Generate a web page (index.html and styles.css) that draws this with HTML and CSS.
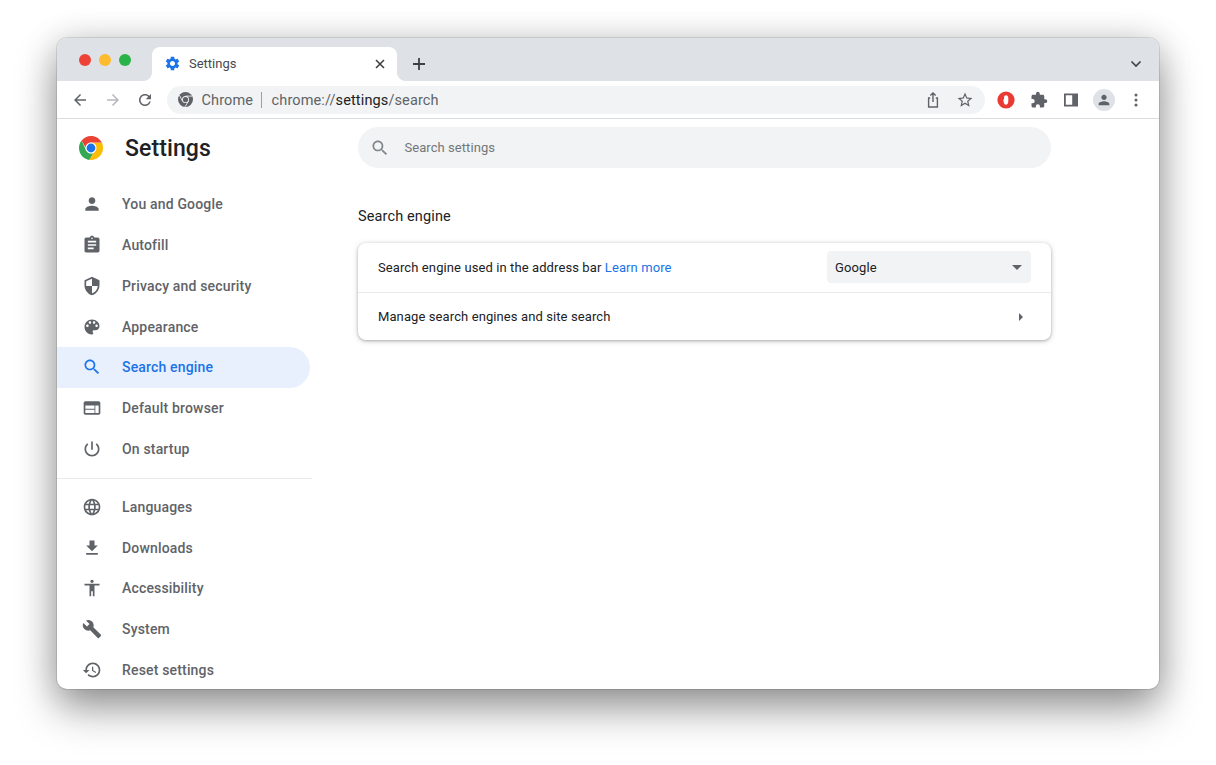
FILE: index.html
```html
<!DOCTYPE html>
<html lang="en">
<head>
<meta charset="utf-8">
<title>Settings</title>
<link rel="stylesheet" href="styles.css">
</head>
<body>
<svg class="defs" width="0" height="0" aria-hidden="true">
  <symbol id="i-person" viewBox="0 0 24 24"><path d="M12 12c2.21 0 4-1.79 4-4s-1.79-4-4-4-4 1.79-4 4 1.79 4 4 4zm0 2c-2.67 0-8 1.34-8 4v2h16v-2c0-2.66-5.33-4-8-4z"/></symbol>
  <symbol id="i-assign" viewBox="0 0 24 24"><path d="M19 3h-4.18C14.4 1.84 13.3 1 12 1c-1.3 0-2.4.84-2.82 2H5c-1.1 0-2 .9-2 2v14c0 1.1.9 2 2 2h14c1.1 0 2-.9 2-2V5c0-1.1-.9-2-2-2zm-7 0c.55 0 1 .45 1 1s-.45 1-1 1-1-.45-1-1 .45-1 1-1zm2 14H7v-2h7v2zm3-4H7v-2h10v2zm0-4H7V7h10v2z"/></symbol>
  <symbol id="i-shield" viewBox="0 0 24 24"><path d="M12 1L3 5v6c0 5.55 3.84 10.74 9 12 5.16-1.26 9-6.45 9-12V5l-9-4zm0 10.99h7c-.53 4.12-3.28 7.79-7 8.94V12H5V6.3l7-3.11v8.8z"/></symbol>
  <symbol id="i-palette" viewBox="0 0 24 24"><path d="M12 3c-4.97 0-9 4.03-9 9s4.03 9 9 9c.83 0 1.5-.67 1.5-1.5 0-.39-.15-.74-.39-1.01-.23-.26-.38-.61-.38-.99 0-.83.67-1.5 1.5-1.5H16c2.76 0 5-2.24 5-5 0-4.42-4.03-8-9-8zm-5.5 9c-.83 0-1.5-.67-1.5-1.5S5.67 9 6.5 9 8 9.67 8 10.5 7.33 12 6.5 12zm3-4C8.67 8 8 7.33 8 6.5S8.67 5 9.5 5s1.5.67 1.5 1.5S10.33 8 9.5 8zm5 0c-.83 0-1.5-.67-1.5-1.5S13.67 5 14.5 5s1.5.67 1.5 1.5S15.33 8 14.5 8zm3 4c-.83 0-1.5-.67-1.5-1.5S16.67 9 17.5 9s1.5.67 1.5 1.5-.67 1.5-1.5 1.5z"/></symbol>
  <symbol id="i-search" viewBox="0 0 24 24"><path d="M15.5 14h-.79l-.28-.27C15.41 12.59 16 11.11 16 9.5 16 5.91 13.09 3 9.5 3S3 5.91 3 9.5 5.91 16 9.5 16c1.61 0 3.09-.59 4.23-1.57l.27.28v.79l5 4.99L20.49 19l-4.99-5zm-6 0C7.01 14 5 11.99 5 9.5S7.01 5 9.5 5 14 7.01 14 9.5 11.99 14 9.5 14z"/></symbol>
  <symbol id="i-web" viewBox="0 0 24 24"><path d="M20 4H4c-1.1 0-1.99.9-1.99 2L2 18c0 1.1.9 2 2 2h16c1.1 0 2-.9 2-2V6c0-1.1-.9-2-2-2zm-5 14H4v-4h11v4zm0-5H4V9h11v4zm5 5h-4V9h4v9z"/></symbol>
  <symbol id="i-power" viewBox="0 0 24 24"><path d="M13 3h-2v10h2V3zm4.83 2.17l-1.42 1.42C17.99 7.86 19 9.81 19 12c0 3.87-3.13 7-7 7s-7-3.13-7-7c0-2.19 1.01-4.14 2.58-5.42L6.17 5.17C4.23 6.82 3 9.26 3 12c0 4.97 4.03 9 9 9s9-4.03 9-9c0-2.74-1.23-5.18-3.17-6.83z"/></symbol>
  <symbol id="i-globe" viewBox="0 0 24 24"><path d="M11.99 2C6.47 2 2 6.48 2 12s4.47 10 9.99 10C17.52 22 22 17.52 22 12S17.52 2 11.99 2zm6.93 6h-2.95c-.32-1.25-.78-2.45-1.38-3.56 1.84.63 3.37 1.91 4.33 3.56zM12 4.04c.83 1.2 1.48 2.53 1.91 3.96h-3.82c.43-1.43 1.08-2.76 1.91-3.96zM4.26 14C4.1 13.36 4 12.69 4 12s.1-1.36.26-2h3.38c-.08.66-.14 1.32-.14 2 0 .68.06 1.34.14 2H4.26zm.82 2h2.95c.32 1.25.78 2.45 1.38 3.56-1.84-.63-3.37-1.9-4.33-3.56zm2.95-8H5.08c.96-1.66 2.49-2.93 4.33-3.56C8.81 5.55 8.35 6.75 8.03 8zM12 19.96c-.83-1.2-1.48-2.53-1.91-3.96h3.82c-.43 1.43-1.08 2.76-1.91 3.96zM14.34 14H9.66c-.09-.66-.16-1.32-.16-2 0-.68.07-1.35.16-2h4.68c.09.65.16 1.32.16 2 0 .68-.07 1.34-.16 2zm.25 5.56c.6-1.11 1.06-2.31 1.38-3.56h2.95c-.96 1.65-2.49 2.93-4.33 3.56zM16.36 14c.08-.66.14-1.32.14-2 0-.68-.06-1.34-.14-2h3.38c.16.64.26 1.31.26 2s-.1 1.36-.26 2h-3.38z"/></symbol>
  <symbol id="i-download" viewBox="0 0 24 24"><path d="M19 9h-4V3H9v6H5l7 7 7-7zM5 18v2h14v-2H5z"/></symbol>
  <symbol id="i-access" viewBox="0 0 24 24"><path d="M12 2c1.1 0 2 .9 2 2s-.9 2-2 2-2-.9-2-2 .9-2 2-2zm9 7h-6v13h-2v-6h-2v6H9V9H3V7h18v2z"/></symbol>
  <symbol id="i-build" viewBox="0 0 24 24"><path d="M22.7 19l-9.1-9.1c.9-2.3.4-5-1.5-6.9-2-2-5-2.4-7.4-1.3L9 6 6 9 1.6 4.7C.4 7.1.9 10.1 2.9 12.1c1.9 1.9 4.6 2.4 6.9 1.5l9.1 9.1c.4.4 1 .4 1.4 0l2.3-2.3c.5-.4.5-1.1.1-1.4z"/></symbol>
  <symbol id="i-restore" viewBox="0 0 24 24"><path d="M13 3c-4.97 0-9 4.03-9 9H1l3.89 3.89.07.14L9 12H6c0-3.87 3.13-7 7-7s7 3.13 7 7-3.13 7-7 7c-1.93 0-3.68-.79-4.94-2.06l-1.42 1.42C8.27 19.99 10.51 21 13 21c4.97 0 9-4.03 9-9s-4.03-9-9-9zm-1 5v5l4.28 2.54.72-1.21-3.5-2.08V8H12z"/></symbol>
</svg>

<div class="window">
  <header class="tabstrip">
    <div class="lights">
      <span class="light red"></span>
      <span class="light yellow"></span>
      <span class="light green"></span>
    </div>
    <div class="tab">
      <svg class="favicon" viewBox="0 0 24 24"><path d="M19.14 12.94c.04-.3.06-.61.06-.94 0-.32-.02-.64-.07-.94l2.03-1.58c.18-.14.23-.41.12-.61l-1.92-3.32c-.12-.22-.37-.29-.59-.22l-2.39.96c-.5-.38-1.03-.7-1.62-.94l-.36-2.54c-.04-.24-.24-.41-.48-.41h-3.84c-.24 0-.43.17-.47.41l-.36 2.54c-.59.24-1.13.57-1.62.94l-2.39-.96c-.22-.08-.47 0-.59.22L2.74 8.87c-.12.21-.08.47.12.61l2.03 1.58c-.05.3-.09.63-.09.94s.02.64.07.94l-2.03 1.58c-.18.14-.23.41-.12.61l1.92 3.32c.12.22.37.29.59.22l2.39-.96c.5.38 1.03.7 1.62.94l.36 2.54c.05.24.24.41.48.41h3.84c.24 0 .44-.17.47-.41l.36-2.54c.59-.24 1.13-.56 1.62-.94l2.39.96c.22.08.47 0 .59-.22l1.92-3.32c.12-.22.07-.47-.12-.61l-2.01-1.58zM12 15.6c-1.98 0-3.6-1.62-3.6-3.6s1.62-3.6 3.6-3.6 3.6 1.62 3.6 3.6-1.62 3.6-3.6 3.6z"/></svg>
      <span class="tab-title">Settings</span>
      <svg class="tab-close" viewBox="0 0 12 12"><path d="M2 2l8 8M10 2l-8 8"/></svg>
    </div>
    <svg class="newtab" viewBox="0 0 14 14"><path d="M7 1v12M1 7h12"/></svg>
    <svg class="tabmenu" viewBox="0 0 12 8"><path d="M1.5 1.5L6 6l4.5-4.5"/></svg>
  </header>

  <div class="toolbar">
    <span class="tbtn"><svg class="ico-18" viewBox="0 0 24 24"><path d="M20 11H7.83l5.59-5.59L12 4l-8 8 8 8 1.41-1.41L7.83 13H20v-2z"/></svg></span>
    <span class="tbtn"><svg class="ico-18 dim" viewBox="0 0 24 24"><path d="M4 11h12.17l-5.59-5.59L12 4l8 8-8 8-1.41-1.41L16.17 13H4v-2z"/></svg></span>
    <span class="tbtn"><svg class="ico-18" viewBox="0 0 24 24"><path d="M17.65 6.35C16.2 4.9 14.21 4 12 4c-4.42 0-7.99 3.58-7.99 8s3.57 8 7.99 8c3.73 0 6.84-2.55 7.73-6h-2.08c-.82 2.33-3.04 4-5.65 4-3.31 0-6-2.69-6-6s2.69-6 6-6c1.66 0 3.14.69 4.22 1.78L13 11h7V4l-2.35 2.35z"/></svg></span>
    <div class="omnibox">
      <svg class="omni-chrome" viewBox="0 0 24 24">
        <circle cx="12" cy="12" r="12" fill="#5f6368"/>
        <path d="M12 6.6h10.6M7.3 14.7L2.2 5.2M16.7 14.7l-5.6 9.2" stroke="#f1f3f4" stroke-width="1.4" fill="none"/>
        <circle cx="12" cy="12" r="5.6" fill="#f1f3f4"/>
        <circle cx="12" cy="12" r="4.2" fill="#5f6368"/>
      </svg>
      <span class="omni-label">Chrome</span>
      <span class="omni-sep"></span>
      <span class="omni-url">chrome://<b>settings</b>/search</span>
      <span class="omni-actions">
        <svg class="ico-18 share" viewBox="0 0 18 18"><path d="M9 11V2.2M6.3 4.6L9 2l2.7 2.6M6.2 7H4.6v9h8.8V7h-1.6"/></svg>
        <svg class="ico-18" viewBox="0 0 24 24"><path d="M22 9.24l-7.19-.62L12 2 9.19 8.63 2 9.24l5.46 4.73L5.82 21 12 17.27 18.18 21l-1.63-7.03L22 9.24zM12 15.4l-3.76 2.27 1-4.28-3.32-2.88 4.38-.38L12 6.1l1.71 4.04 4.38.38-3.32 2.88 1 4.28L12 15.4z"/></svg>
      </span>
    </div>
    <span class="tbtn"><svg class="ext-red" viewBox="0 0 18 18">
      <circle cx="9" cy="9" r="8.6" fill="#ea3a33"/>
      <path d="M9 4.2c1.4 0 2.3 1.1 2.3 2.8v3c0 2-1 3.8-2.3 3.8-1.1 0-1.8-.9-2.1-2L6.2 8.8c0-.4.5-.5.8-.1V7C7 5.3 7.7 4.2 9 4.2z" fill="#fff"/>
    </svg></span>
    <span class="tbtn"><svg class="ico-18" viewBox="0 0 24 24"><path d="M20.5 11H19V7c0-1.1-.9-2-2-2h-4V3.5C13 2.12 11.88 1 10.5 1S8 2.12 8 3.5V5H4c-1.1 0-1.99.9-1.99 2v3.8H3.5c1.49 0 2.7 1.21 2.7 2.7s-1.21 2.7-2.7 2.7H2V20c0 1.1.9 2 2 2h3.8v-1.5c0-1.49 1.21-2.7 2.7-2.7 1.49 0 2.7 1.21 2.7 2.7V22H17c1.1 0 2-.9 2-2v-4h1.5c1.38 0 2.5-1.12 2.5-2.5S21.88 11 20.5 11z"/></svg></span>
    <span class="tbtn"><svg class="ico-16" viewBox="0 0 16 16"><path fill-rule="evenodd" d="M1 1.5h14v13H1zM2.8 3.2v9.6h6.4V3.2z"/></svg></span>
    <span class="tbtn"><span class="avatar"><svg class="ico-16" viewBox="0 0 24 24"><use href="#i-person"/></svg></span></span>
    <span class="tbtn"><svg class="ico-16" viewBox="0 0 16 16"><circle cx="8" cy="3" r="1.5"/><circle cx="8" cy="8" r="1.5"/><circle cx="8" cy="13" r="1.5"/></svg></span>
  </div>

  <div class="content">
    <nav class="sidebar">
      <div class="brand">
        <svg class="brand-logo" viewBox="0 0 24 24">
          <path fill="#34a853" d="M2.6 4.6C.9 6.6 0 9.2 0 12c0 6.1 4.5 11.1 10.4 11.9l4.1-7.1c-.8.4-1.6.6-2.5.6-2.4 0-4.5-1.5-5.3-3.8z"/>
          <path fill="#fbbc04" d="M22.9 6.6H12l2.5 10.2-4.1 7.1c.5.1 1.1.1 1.6.1 6.6 0 12-5.4 12-12 0-1.9-.4-3.8-1.1-5.4z"/>
          <path fill="#ea4335" d="M12 0C8.2 0 4.8 1.8 2.6 4.6l4.1 7.1C7.1 8.9 9.3 6.7 12 6.6h10.9C20.9 2.7 16.5 0 12 0z"/>
          <circle cx="12" cy="12" r="5.5" fill="#fff"/>
          <circle cx="12" cy="12" r="4.4" fill="#1a73e8"/>
        </svg>
        <span class="brand-title">Settings</span>
      </div>
      <a class="nav-item"><svg viewBox="0 0 24 24"><use href="#i-person"/></svg>You and Google</a>
      <a class="nav-item"><svg viewBox="0 0 24 24"><use href="#i-assign"/></svg>Autofill</a>
      <a class="nav-item"><svg viewBox="0 0 24 24"><use href="#i-shield"/></svg>Privacy and security</a>
      <a class="nav-item"><svg viewBox="0 0 24 24"><use href="#i-palette"/></svg>Appearance</a>
      <a class="nav-item active"><svg viewBox="0 0 24 24"><use href="#i-search"/></svg>Search engine</a>
      <a class="nav-item"><svg viewBox="0 0 24 24"><use href="#i-web"/></svg>Default browser</a>
      <a class="nav-item"><svg viewBox="0 0 24 24"><use href="#i-power"/></svg>On startup</a>
      <div class="nav-divider"></div>
      <a class="nav-item"><svg viewBox="0 0 24 24"><use href="#i-globe"/></svg>Languages</a>
      <a class="nav-item"><svg viewBox="0 0 24 24"><use href="#i-download"/></svg>Downloads</a>
      <a class="nav-item"><svg viewBox="0 0 24 24"><use href="#i-access"/></svg>Accessibility</a>
      <a class="nav-item"><svg viewBox="0 0 24 24"><use href="#i-build"/></svg>System</a>
      <a class="nav-item"><svg viewBox="0 0 24 24"><use href="#i-restore"/></svg>Reset settings</a>
    </nav>

    <main class="main">
      <div class="searchbar">
        <svg viewBox="0 0 24 24"><use href="#i-search"/></svg>
        <span>Search settings</span>
      </div>
      <h2 class="section-title">Search engine</h2>
      <section class="card">
        <div class="row row-first">
          <span class="row-text">Search engine used in the address bar <a class="link">Learn more</a></span>
          <div class="select"><span>Google</span><i class="caret-down"></i></div>
        </div>
        <div class="row row-link">
          <span class="row-text">Manage search engines and site search</span>
          <i class="caret-right"></i>
        </div>
      </section>
    </main>
  </div>
</div>
</body>
</html>
```

FILE: styles.css
```css
* { box-sizing: border-box; }

html, body {
  margin: 0;
  height: 765px;
  overflow: hidden;
  background: #fff;
  font-family: Roboto, "Liberation Sans", sans-serif;
}

.defs { display: block; height: 0; }

body { padding: 38px 57px 0; }

.window {
  width: 1102px;
  height: 651px;
  border-radius: 10px;
  overflow: hidden;
  background: #fff;
  display: flex;
  flex-direction: column;
  box-shadow: 0 0 0 1px rgba(0, 0, 0, .1), 0 20px 42px rgba(0, 0, 0, .38), 0 2px 34px rgba(0, 0, 0, .16);
}

/* tab strip */
.tabstrip {
  height: 43px;
  flex: none;
  background: #dee1e6;
  display: flex;
  align-items: flex-end;
  padding: 0 17px 0 22px;
}

.lights {
  display: flex;
  gap: 8px;
  align-self: flex-start;
  padding-top: 16px;
  width: 73px;
}

.light { width: 12px; height: 12px; border-radius: 50%; }
.red { background: #ee4238; }
.yellow { background: #fdbb2d; }
.green { background: #28b446; }

.tab {
  position: relative;
  width: 245px;
  height: 34px;
  background: #fff;
  border-radius: 8px 8px 0 0;
  display: flex;
  align-items: center;
  padding: 0 11px 1px 11.5px;
}

.tab::before, .tab::after {
  content: "";
  position: absolute;
  bottom: 0;
  width: 8px;
  height: 8px;
}
.tab::before { left: -8px; background: radial-gradient(circle at 0 0, transparent 7.5px, #fff 8px); }
.tab::after { right: -8px; background: radial-gradient(circle at 100% 0, transparent 7.5px, #fff 8px); }

.favicon { width: 17px; height: 17px; fill: #1a73e8; flex: none; }
.tab-title { margin-left: 8.5px; font-size: 13px; color: #45494e; flex: 1; }
.tab-close { width: 12px; height: 12px; fill: none; stroke: #3c4043; stroke-width: 1.6; }

.newtab {
  width: 14px;
  height: 14px;
  margin: 0 0 10px 15px;
  fill: none;
  stroke: #3c4043;
  stroke-width: 1.8;
}

.tabmenu {
  width: 12px;
  height: 8px;
  margin: 0 0 13px auto;
  fill: none;
  stroke: #3c4043;
  stroke-width: 1.6;
}

/* toolbar */
.toolbar {
  height: 38px;
  flex: none;
  display: flex;
  align-items: center;
  padding: 0 6.5px 0 7px;
  border-bottom: 1px solid #dadce0;
  background: #fff;
}

.tbtn {
  width: 32.5px;
  flex: none;
  display: flex;
  justify-content: center;
  align-items: center;
}

.ico-18 { width: 18px; height: 18px; fill: #5f6368; flex: none; }
.ico-16 { width: 16px; height: 16px; fill: #5f6368; flex: none; }
.dim { fill: #b6b9bd; }
.share { fill: none; stroke: #5f6368; stroke-width: 1.4; }
.ext-red { width: 18px; height: 18px; }

.avatar {
  width: 22px;
  height: 22px;
  border-radius: 50%;
  background: #dee1e6;
  display: flex;
  align-items: center;
  justify-content: center;
}

.omnibox {
  flex: 1;
  height: 28px;
  margin: 0 5.5px 0 5.5px;
  border-radius: 14px;
  background: #f1f3f4;
  display: flex;
  align-items: center;
  padding: 0 11px 0 11px;
  font-size: 14.5px;
  letter-spacing: .12px;
  color: #5f6368;
}

.omni-chrome { width: 15px; height: 15px; flex: none; }
.omni-label { margin-left: 8.5px; padding-top: 1px; }
.omni-sep { width: 1px; height: 16px; background: #9aa0a6; margin: 0 9.5px 0 8px; }
.omni-url { padding-top: 1px; }
.omni-url b { font-weight: 400; color: #202124; }
.omni-actions { margin-left: auto; display: flex; gap: 14px; }

/* content */
.content { flex: 1; min-height: 0; display: flex; }

.sidebar { width: 255px; flex: none; }

.brand {
  height: 58px;
  margin-bottom: 7px;
  display: flex;
  align-items: center;
  padding-left: 22px;
}

.brand-logo { width: 24px; height: 24px; flex: none; }
.brand-title { margin-left: 22px; padding-top: 1px; font-size: 23px; font-weight: 500; letter-spacing: .1px; color: #202124; }

.nav-item {
  height: 40.75px;
  width: 253px;
  display: flex;
  align-items: center;
  padding-left: 25px;
  border-radius: 0 21px 21px 0;
  font-size: 14px;
  font-weight: 500;
  letter-spacing: .17px;
  color: #5f6368;
}

.nav-item svg { width: 20px; height: 20px; margin-right: 20px; fill: #5f6368; flex: none; }
.nav-item.active { background: #e8f0fe; color: #1a73e8; }
.nav-item.active svg { fill: #1a73e8; }

.nav-divider { height: 1px; background: #e8eaed; margin: 8.6px 0 7.7px; }

.main { margin-left: 46px; width: 693px; padding-top: 8px; }

.searchbar {
  height: 41px;
  border-radius: 21px;
  background: #f1f3f4;
  display: flex;
  align-items: center;
  padding-left: 12px;
  font-size: 13px;
  letter-spacing: .06px;
  color: #73777b;
}

.searchbar svg { width: 20px; height: 20px; margin-right: 14.5px; fill: #80868b; }

.section-title {
  margin: 39px 0 16px;
  font-size: 14.5px;
  line-height: 20px;
  font-weight: 400;
  letter-spacing: .13px;
  color: #202124;
}

.card {
  border-radius: 8px;
  background: #fff;
  box-shadow: 0 1px 3px rgba(60, 64, 67, .35), 0 1px 6px rgba(60, 64, 67, .18);
}

.row {
  height: 49px;
  display: flex;
  align-items: center;
  justify-content: space-between;
  padding: 0 20px;
  font-size: 13px;
  letter-spacing: .1px;
  color: #202124;
}

.row-first { padding-bottom: 1px; }
.row-link { height: 48px; border-top: 1px solid #e8eaed; }
.link { color: #1a73e8; }

.select {
  width: 204px;
  height: 32px;
  border-radius: 4px;
  background: #f1f3f4;
  display: flex;
  align-items: center;
  justify-content: space-between;
  padding: 0 8px;
}

.caret-down {
  width: 0;
  height: 0;
  margin-right: 1px;
  border-left: 5px solid transparent;
  border-right: 5px solid transparent;
  border-top: 5px solid #5f6368;
}

.caret-right {
  width: 0;
  height: 0;
  margin-right: 8px;
  border-top: 4px solid transparent;
  border-bottom: 4px solid transparent;
  border-left: 4px solid #5f6368;
}
```
